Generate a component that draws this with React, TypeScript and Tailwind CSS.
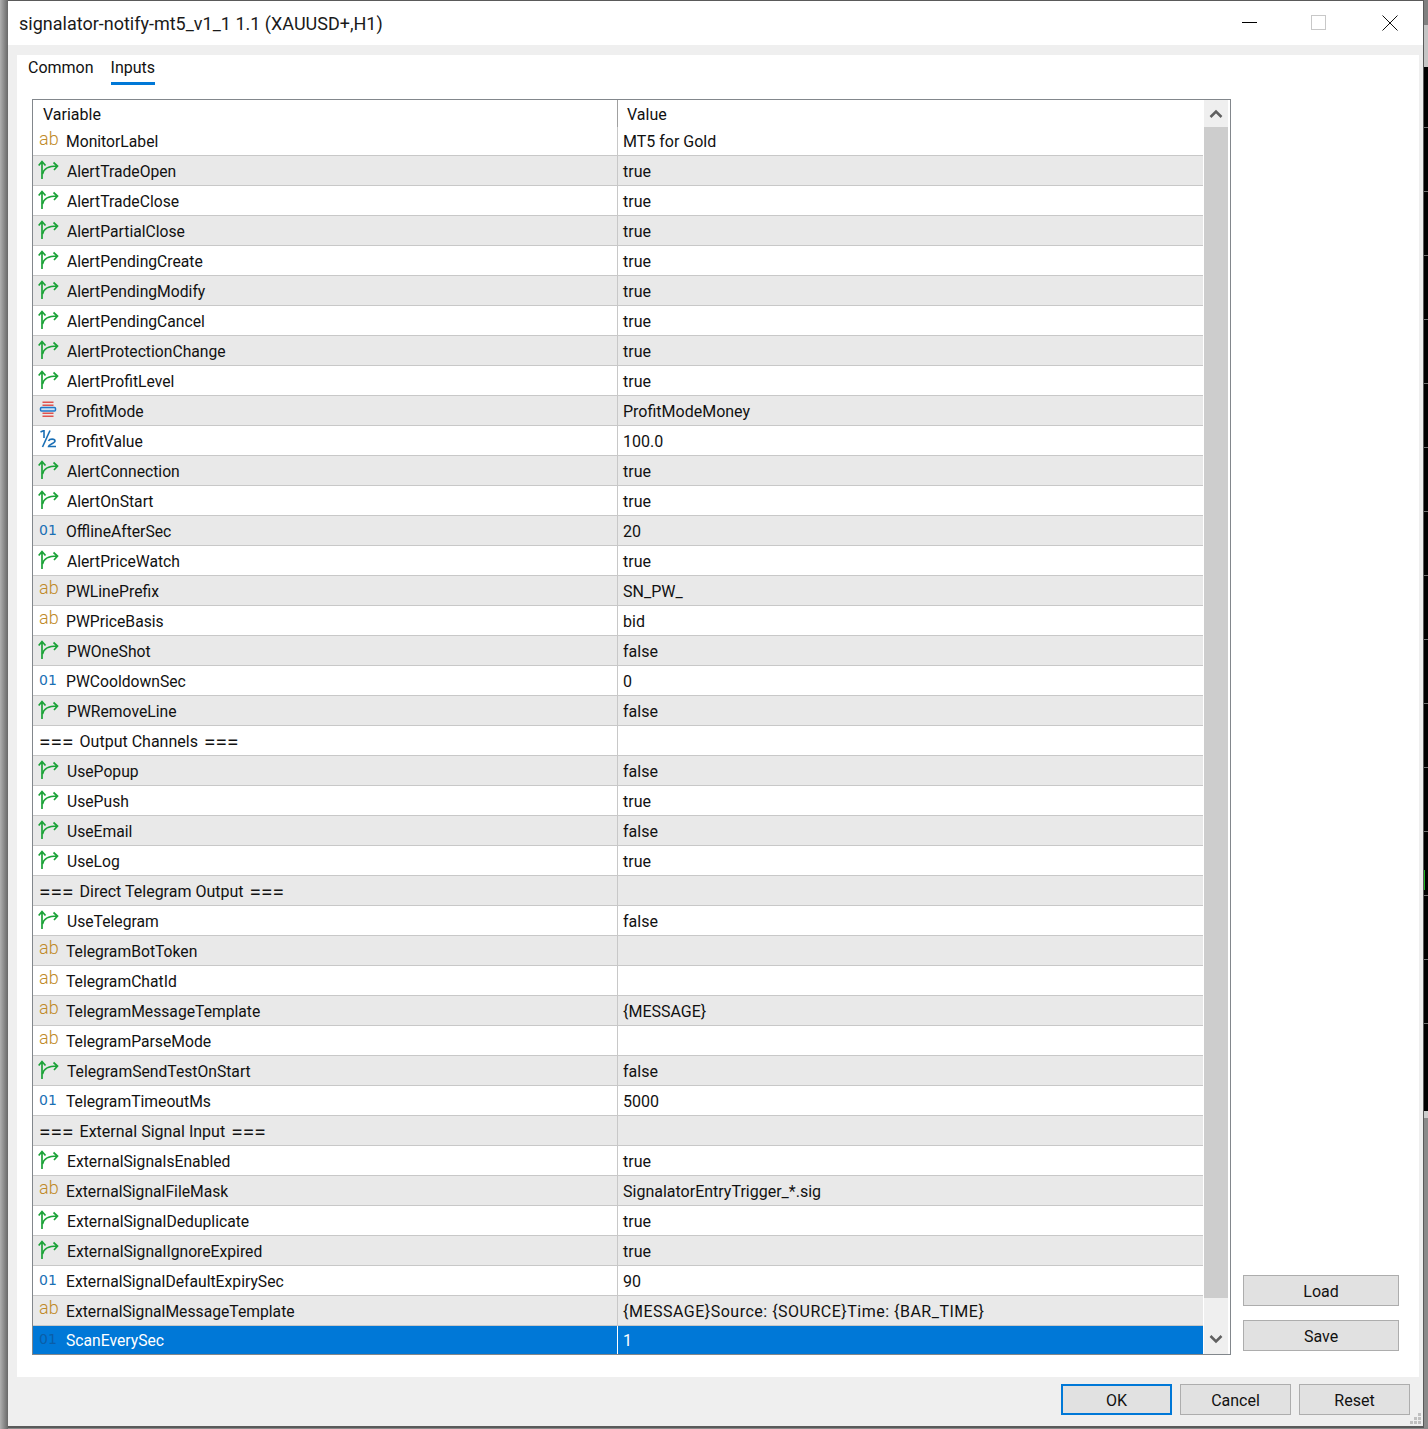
const font = { fontFamily: 'Roboto, "Noto Sans", sans-serif' };

type Kind = "ab" | "bool" | "enum" | "half" | "int" | "none";
const rows: [Kind, string, string][] = [
  ["ab", "MonitorLabel", "MT5 for Gold"],
  ["bool", "AlertTradeOpen", "true"],
  ["bool", "AlertTradeClose", "true"],
  ["bool", "AlertPartialClose", "true"],
  ["bool", "AlertPendingCreate", "true"],
  ["bool", "AlertPendingModify", "true"],
  ["bool", "AlertPendingCancel", "true"],
  ["bool", "AlertProtectionChange", "true"],
  ["bool", "AlertProfitLevel", "true"],
  ["enum", "ProfitMode", "ProfitModeMoney"],
  ["half", "ProfitValue", "100.0"],
  ["bool", "AlertConnection", "true"],
  ["bool", "AlertOnStart", "true"],
  ["int", "OfflineAfterSec", "20"],
  ["bool", "AlertPriceWatch", "true"],
  ["ab", "PWLinePrefix", "SN_PW_"],
  ["ab", "PWPriceBasis", "bid"],
  ["bool", "PWOneShot", "false"],
  ["int", "PWCooldownSec", "0"],
  ["bool", "PWRemoveLine", "false"],
  ["none", "Output Channels", ""],
  ["bool", "UsePopup", "false"],
  ["bool", "UsePush", "true"],
  ["bool", "UseEmail", "false"],
  ["bool", "UseLog", "true"],
  ["none", "Direct Telegram Output", ""],
  ["bool", "UseTelegram", "false"],
  ["ab", "TelegramBotToken", ""],
  ["ab", "TelegramChatId", ""],
  ["ab", "TelegramMessageTemplate", "{MESSAGE}"],
  ["ab", "TelegramParseMode", ""],
  ["bool", "TelegramSendTestOnStart", "false"],
  ["int", "TelegramTimeoutMs", "5000"],
  ["none", "External Signal Input", ""],
  ["bool", "ExternalSignalsEnabled", "true"],
  ["ab", "ExternalSignalFileMask", "SignalatorEntryTrigger_*.sig"],
  ["bool", "ExternalSignalDeduplicate", "true"],
  ["bool", "ExternalSignalIgnoreExpired", "true"],
  ["int", "ExternalSignalDefaultExpirySec", "90"],
  ["ab", "ExternalSignalMessageTemplate", "{MESSAGE}Source: {SOURCE}Time: {BAR_TIME}"],
  ["int", "ScanEverySec", "1"],
];

const ticks = Array.from({ length: 15 }, (_, i) => i);

function TypeIcon({ kind, selected }: { kind: Kind; selected: boolean }) {
  if (kind === "ab")
    return <span className="w-[18px] text-[18px] leading-[18px] -mt-[5px] font-light text-[#c08a28]">ab</span>;
  if (kind === "int")
    return (
      <span
        style={{ fontFamily: '"DejaVu Sans", sans-serif' }}
        className={`w-[18px] text-[14px] leading-[18px] -mt-[2px] ${selected ? "text-[#0a5ea8]" : "text-[#1a6fb5]"}`}
      >
        01
      </span>
    );
  if (kind === "bool")
    return (
      <svg width="21" height="20" viewBox="0 0 21 20" fill="none" stroke="#1ba338" strokeWidth="1.700" className="-mt-[2px] -ml-[1px] mr-[-1px]">
        <path d="M4 19V1.500M0.700 5.500 4 1.500l3.500 4" />
        <path d="M4.500 14c1-5 6-8 14.500-8M15.500 2.500 19.500 6l-3.500 4" />
      </svg>
    );
  if (kind === "enum")
    return (
      <svg width="18" height="18" viewBox="0 0 18 18" className="-mt-[3px]">
        <rect x="3.500" y="1.500" width="11" height="1.500" fill="#e0534f" />
        <rect x="3.500" y="4.500" width="11" height="1.500" fill="#e0534f" />
        <rect x="1.500" y="7.500" width="15" height="3.500" rx="1" fill="#cfe3f5" stroke="#1f78c8" strokeWidth="1.500" />
        <rect x="3.500" y="12.500" width="11" height="1.500" fill="#e0534f" />
        <rect x="3.500" y="15.500" width="11" height="1.500" fill="#e0534f" />
      </svg>
    );
  if (kind === "half")
    return (
      <svg width="18" height="18" viewBox="0 0 18 18" fill="none" stroke="#1a6fb5" strokeWidth="1.600" className="-mt-[3px]">
        <path d="M1.500 2 5 0.500V8" />
        <path d="M11 0.500 3.500 17" />
        <path d="M9.500 11c1-2.500 6.500-2.500 6.500 0 0 2.500-6.500 3.500-6.500 5.500H17" />
      </svg>
    );
  return null;
}

function Button({ label, primary, w }: { label: string; primary?: boolean; w: string }) {
  return (
    <div
      className={`${w} flex items-center justify-center pt-[2px] bg-[#e1e1e1] text-[16px] text-[#111] ${
        primary ? "border-2 border-[#0078d7]" : "border border-[#adadad]"
      }`}
    >
      {label}
    </div>
  );
}

export default function App() {
  return (
    <div style={font} className="w-[1428px] h-[1429px] bg-[#8a8a8a] overflow-hidden flex">
      <div className="w-[8px] bg-gradient-to-r from-[#b0b0b0] to-[#686868]" />
      <div className="w-[1416px] h-[1428px] shrink-0 flex flex-col bg-[#efefef] border-t border-b-2 border-r border-[#5a5a5a]">
        <div className="h-[44px] shrink-0 bg-white flex items-center justify-between pl-[11px] text-[18px] text-[#1a1a1a]">
          <span className="mt-[1px]">signalator-notify-mt5_v1_1 1.1 (XAUUSD+,H1)</span>
          <div className="flex items-center pr-[25px] -mt-[1px]">
            <div className="w-[15px] h-px bg-black mr-[54px]" />
            <div className="w-[15px] h-[15px] border border-[#c8c8c8] mr-[56px]" />
            <svg width="16" height="16" viewBox="0 0 16 16" stroke="#111" strokeWidth="1">
              <path d="M0.500 0.500l15 15M15.500 0.500l-15 15" />
            </svg>
          </div>
        </div>

        <div className="h-[10px] shrink-0" />

        <div className="h-[1322px] shrink-0 ml-[9px] mr-[4px] bg-white flex flex-col">
          <div className="flex h-[44px] shrink-0 pl-[11px] gap-[17px] text-[16px] text-[#111]">
            <span className="h-[30px] pt-px">Common</span>
            <span className="h-[30px] pt-px border-b-[3px] border-[#0078d7]">Inputs</span>
          </div>

          <div className="flex pl-[15px] flex-1">
            <div className="w-[1199px] h-[1256px] border border-[#82878c] bg-white flex">
              <div className="w-[1170px] flex flex-col">
                <div className="h-[27px] shrink-0 flex text-[16px] text-[#111]">
                  <div className="w-[585px] pl-[10px] pt-[3px] border-r border-[#a0a0a0]">Variable</div>
                  <div className="pl-[9px] pt-[3px]">Value</div>
                </div>
                {rows.map(([kind, name, value], i) => {
                  const selected = i === rows.length - 1;
                  const bg = selected ? "bg-[#0078d7] text-white" : i % 2 === 1 ? "bg-[#e9e9e9] text-[#111]" : "bg-white text-[#111]";
                  const h = i === 0 ? "h-[29px]" : selected ? "h-[28px]" : "h-[30px]";
                  return (
                    <div key={i} className={`${h} shrink-0 ${bg} flex ${selected ? "" : "border-b border-[#c8c8c8]"}`}>
                      <div className={`w-[585px] flex items-center pl-[6px] border-r ${selected ? "border-white" : "border-[#c8c8c8]"}`}>
                        {kind !== "none" ? (
                          <>
                            <TypeIcon kind={kind} selected={selected} />
                            <span className="ml-[9px] mt-[2px] text-[15.700px]">{name}</span>
                          </>
                        ) : (
                          <span className="mt-[2px] text-[16px] flex items-center gap-[6px]">
                            <span className="text-[21px] leading-[20px]">===</span>
                            {name}
                            <span className="text-[21px] leading-[20px]">===</span>
                          </span>
                        )}
                      </div>
                      <div className={`flex items-center pl-[5px] pt-[2px] text-[16px] ${value.length > 30 ? "tracking-[0.500px]" : ""}`}>{value}</div>
                    </div>
                  );
                })}
              </div>
              <div className="w-[24px] ml-[1px] bg-[#efefef] flex flex-col">
                <div className="h-[27px] flex items-center justify-center">
                  <svg width="14" height="10" viewBox="0 0 14 10" fill="none" stroke="#606060" strokeWidth="2.500">
                    <path d="M1.500 8 7 2.500 12.500 8" />
                  </svg>
                </div>
                <div className="h-[1171px] bg-[#cdcdcd]" />
                <div className="flex-1 flex items-center justify-center pt-[26px]">
                  <svg width="14" height="10" viewBox="0 0 14 10" fill="none" stroke="#606060" strokeWidth="2.500">
                    <path d="M1.500 2 7 7.500 12.500 2" />
                  </svg>
                </div>
              </div>
            </div>
            <div className="flex flex-col justify-end ml-[12px] w-[156px] h-[1252px] gap-[14px]">
              <Button label="Load" w="w-[156px] h-[31px]" />
              <Button label="Save" w="w-[156px] h-[31px]" />
            </div>
          </div>
        </div>

        <div className="relative flex-1 flex justify-end items-start pt-[7px] pr-[13px] gap-[8px]">
          <Button label="OK" primary w="w-[111px] h-[31px]" />
          <Button label="Cancel" w="w-[111px] h-[31px]" />
          <Button label="Reset" w="w-[111px] h-[31px]" />
          <svg width="12" height="12" viewBox="0 0 12 12" fill="#c0c0c0" className="absolute right-[1px] bottom-[1px]">
            <rect x="8" y="0" width="3" height="3" />
            <rect x="4" y="4" width="3" height="3" />
            <rect x="8" y="4" width="3" height="3" />
            <rect x="0" y="8" width="3" height="3" />
            <rect x="4" y="8" width="3" height="3" />
            <rect x="8" y="8" width="3" height="3" />
          </svg>
        </div>
      </div>

      <div className="relative w-[4px] h-[1429px] shrink-0 flex flex-col">
        <div className="h-[25px] bg-[#808080]" />
        <div className="h-[42px] bg-[#c4c4c4]" />
        <div className="h-[60px] bg-black" />
        {ticks.map((t) => (
          <div key={t} className="h-[64px] bg-black border-t border-[#707070]" />
        ))}
        <div className="h-[24px] bg-black" />
        <div className="h-[7px] bg-[#cccccc]" />
        <div className="flex-1 bg-[#8a8a8a]" />
        <div className="absolute left-0 top-[870px] w-[1px] h-[20px] bg-[#22b422]" />
      </div>
    </div>
  );
}
